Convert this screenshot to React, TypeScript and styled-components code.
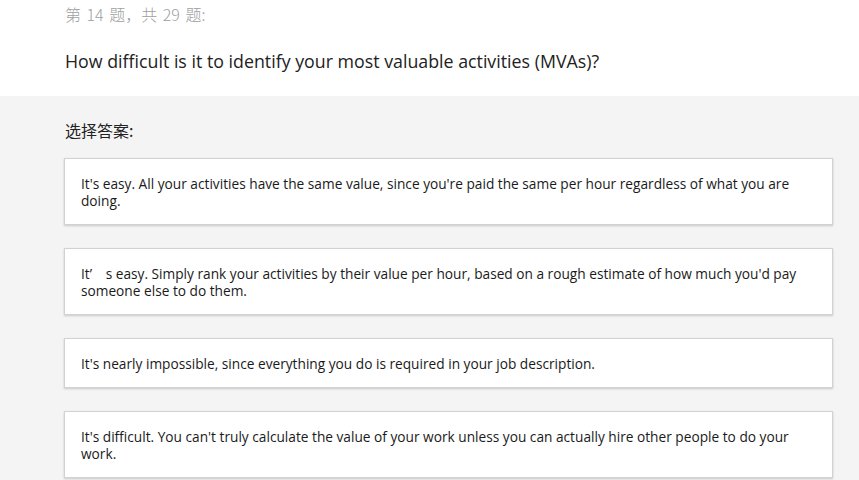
import React from "react";
import styled, { createGlobalStyle } from "styled-components";

const GlobalStyle = createGlobalStyle`
  html, body {
    margin: 0;
    padding: 0;
    background: #f4f4f4;
    font-family: "Open Sans", "Noto Sans CJK SC", sans-serif;
  }
`;

const Page = styled.div`
  width: 859px;
  min-height: 480px;
  background: #f4f4f4;
`;

const Header = styled.div`
  background: #fff;
  height: 96px;
  padding: 0 65px;
  box-sizing: border-box;
`;

const Progress = styled.div`
  color: #a0a0a0;
  font-size: 16px;
  line-height: 20px;
  padding-top: 4px;
  word-spacing: 2px;
  font-family: "Noto Sans CJK SC", sans-serif;
  font-weight: 300;
`;

const Question = styled.h1`
  margin: 0;
  padding-top: 25px;
  font-size: 17.8px;
  line-height: 24px;
  font-weight: normal;
  color: #222;
`;

const Body = styled.div`
  padding: 23px 26px 0 64px;
`;

const Prompt = styled.div`
  font-family: "Noto Sans CJK SC", sans-serif;
  font-size: 16px;
  line-height: 22px;
  color: #222;
  margin-bottom: 17px;
  padding-left: 1px;
`;

const AnswerList = styled.div`
  display: flex;
  flex-direction: column;
  gap: 23px;
`;

const AnswerCard = styled.div`
  background: #fff;
  border: 1px solid #d2d2d2;
  box-shadow: 0 1px 2px rgba(0, 0, 0, 0.18);
  padding: 16px 16px 15px;
  font-size: 13.7px;
  line-height: 17px;
  color: #1a1a1a;
`;

const answers = [
  "It's easy. All your activities have the same value, since you're paid the same per hour regardless of what you are doing.",
  "It\u2019\u2003s easy. Simply rank your activities by their value per hour, based on a rough estimate of how much you'd pay someone else to do them.",
  "It's nearly impossible, since everything you do is required in your job description.",
  "It's difficult. You can't truly calculate the value of your work unless you can actually hire other people to do your work.",
];

export default function App() {
  return (
    <Page>
      <GlobalStyle />
      <Header>
        <Progress>第 14 题，共 29 题:</Progress>
        <Question>How difficult is it to identify your most valuable activities (MVAs)?</Question>
      </Header>
      <Body>
        <Prompt>选择答案:</Prompt>
        <AnswerList>
          {answers.map((text, i) => (
            <AnswerCard key={i}>{text}</AnswerCard>
          ))}
        </AnswerList>
      </Body>
    </Page>
  );
}
